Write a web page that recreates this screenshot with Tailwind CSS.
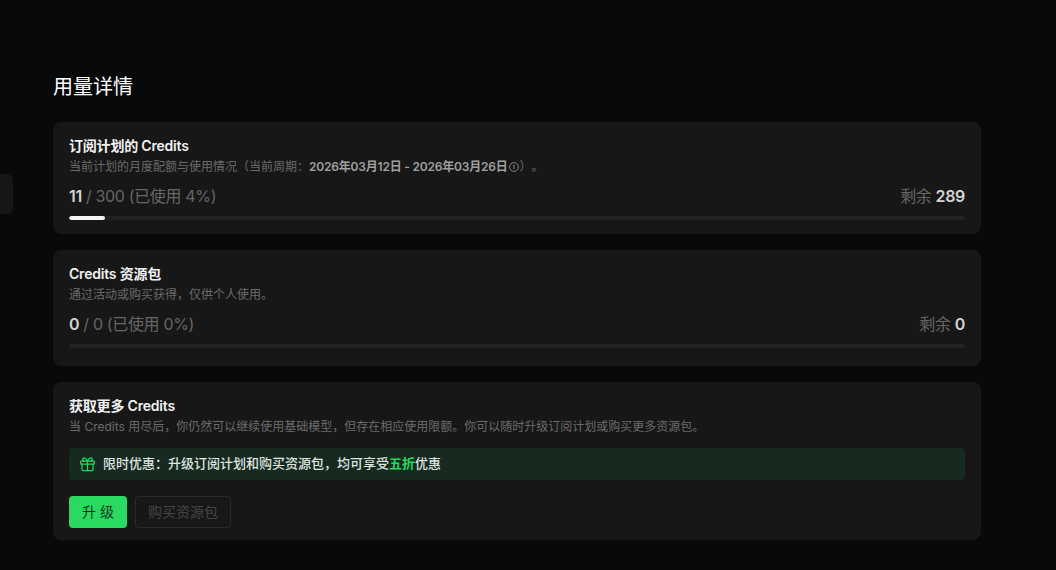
<!DOCTYPE html>
<html lang="zh-CN">

<head>
	<meta charset="UTF-8" />
	<meta name="viewport" content="width=device-width, initial-scale=1.0" />
	<title>用量详情</title>
	<script src="https://cdn.jsdelivr.net/npm/@tailwindcss/browser@4"></script>
</head>

<body class="relative h-[570px] overflow-hidden bg-[#08090b] font-['Inter','Noto_Sans_CJK_SC',sans-serif]">
	<!-- sidebar item peeking in from the left -->
	<div class="absolute left-0 top-[174px] h-10 w-[13px] rounded-r-md bg-[#151616]"></div>

	<main class="ml-[53px] w-[928px] pt-[73px]">
		<h1 class="mb-[21px] h-7 text-xl leading-7 font-normal text-white">用量详情</h1>

		<div class="flex flex-col gap-4">
			<section class="rounded-lg bg-[#171717] px-4 pt-4 pb-[14px]">
				<h2 class="text-sm leading-4 font-semibold tracking-[-0.2px] text-[#f2f2f2]">订阅计划的 Credits</h2>
				<p class="mt-[5px] flex items-center text-xs leading-4 text-[#6b6b6b] [text-spacing-trim:space-all]">
					当前计划的月度配额与使用情况（当前周期：<b class="font-semibold tracking-[-0.2px] text-[#a0a0a0]">2026年03月12日 - 2026年03月26日</b>
					<svg class="mx-px h-[10px] w-[10px] text-[#8f8f8f]" viewBox="0 0 10 10" fill="none" stroke="currentColor">
						<circle cx="5" cy="5" r="4.4" stroke-width="0.9" />
						<path d="M5 2.8v4.4" stroke-width="1" />
					</svg>
					）。
				</p>
				<div class="mt-[11px] flex items-center justify-between text-base leading-5 tracking-[-0.35px] text-[#666666]">
					<span><b class="font-semibold text-[#d4d4d4]">11</b> / 300 (已使用 4%)</span>
					<span>剩余 <b class="font-semibold text-[#d4d4d4]">289</b></span>
				</div>
				<div class="mt-[10px] h-1 overflow-hidden rounded-full bg-[#232323]">
					<div class="h-full rounded-full bg-[#f4f4f4]" style="width: 4%"></div>
				</div>
			</section>

			<section class="rounded-lg bg-[#171717] px-4 pt-4 pb-[18px]">
				<h2 class="text-sm leading-4 font-semibold tracking-[-0.2px] text-[#f2f2f2]">Credits 资源包</h2>
				<p class="mt-[5px] text-xs leading-4 text-[#6b6b6b]">通过活动或购买获得，仅供个人使用。</p>
				<div class="mt-[11px] flex items-center justify-between text-base leading-5 tracking-[-0.35px] text-[#666666]">
					<span><b class="font-semibold text-[#d4d4d4]">0</b> / 0 (已使用 0%)</span>
					<span>剩余 <b class="font-semibold text-[#d4d4d4]">0</b></span>
				</div>
				<div class="mt-[10px] h-1 rounded-full bg-[#232323]"></div>
			</section>

			<section class="h-[158px] rounded-lg bg-[#171717] px-4 pt-4">
				<h2 class="text-sm leading-4 font-semibold tracking-[-0.2px] text-[#f2f2f2]">获取更多 Credits</h2>
				<p class="mt-[5px] text-xs leading-4 text-[#6b6b6b]">当 Credits 用尽后，你仍然可以继续使用基础模型，但存在相应使用限额。你可以随时升级订阅计划或购买更多资源包。</p>
				<div class="mt-[13px] flex h-8 items-center gap-2 rounded bg-[#172a20] pr-[10px] pl-[11px] text-[13px] font-medium text-[#dfe5e1]">
					<svg class="h-[15px] w-[15px] text-[#2bd65f]" viewBox="0 0 15 15" fill="none" stroke="currentColor" stroke-width="1.25" stroke-linecap="round" stroke-linejoin="round">
						<rect x="0.7" y="4" width="13.6" height="3.2" rx="0.6" />
						<path d="M2 7.2v5.4a1 1 0 0 0 1 1h9a1 1 0 0 0 1-1V7.2M7.5 4v9.6" />
						<path d="M7.5 4C6.5 2 5.5 0.8 4.3 0.8a1.6 1.6 0 0 0 0 3.2M7.5 4C8.5 2 9.5 0.8 10.7 0.8a1.6 1.6 0 0 1 0 3.2" />
					</svg>
					<span>限时优惠：升级订阅计划和购买资源包，均可享受<span class="font-semibold text-[#2bd65f]">五折</span>优惠</span>
				</div>
				<div class="mt-4 flex items-center gap-2">
					<button class="h-8 w-[58px] rounded bg-[#2ad95f] pl-1 text-sm tracking-[4px] text-[#10351c]">升级</button>
					<button class="h-8 w-24 rounded border border-[#2a2a2a] text-sm text-[#454545]">购买资源包</button>
				</div>
			</section>
		</div>
	</main>
</body>

</html>
